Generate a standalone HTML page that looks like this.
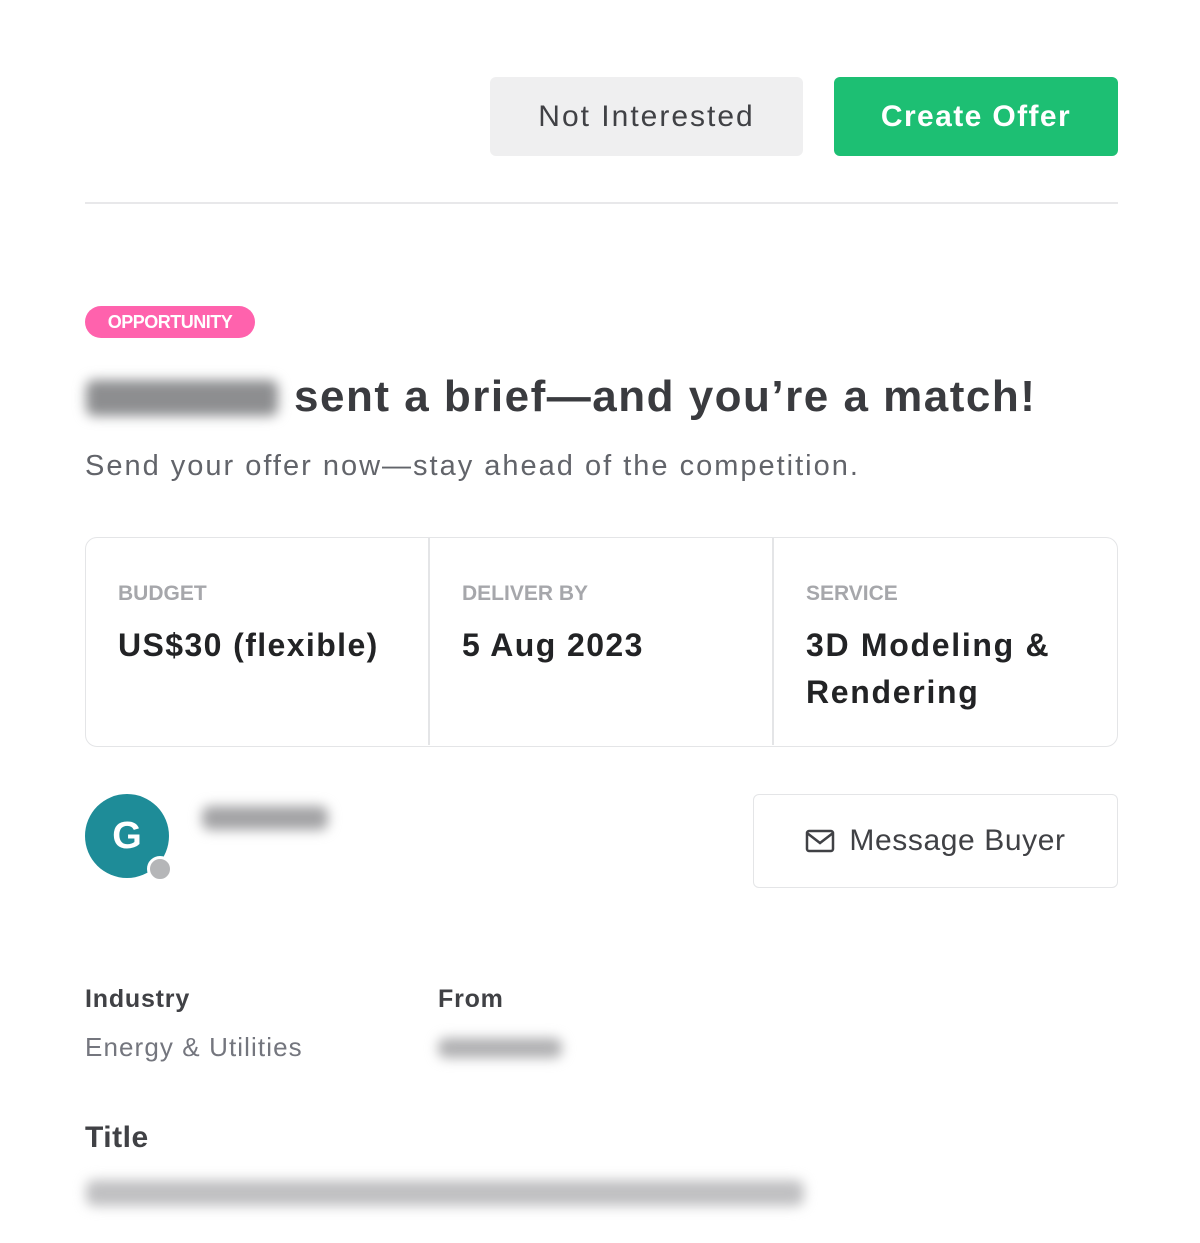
<!DOCTYPE html>
<html><head><meta charset="utf-8"><style>
*{margin:0;padding:0;box-sizing:border-box}
body{width:1200px;height:1243px;background:#fff;font-family:"Liberation Sans",Arial,sans-serif;position:relative;overflow:hidden;color:#404145}
.a{position:absolute;white-space:nowrap}
.btn{position:absolute;border-radius:6px;display:flex;align-items:center;justify-content:center;font-size:30px}
.blur{position:absolute;background:#9a9a9c;filter:blur(6px);border-radius:8px}
.lbl{position:absolute;font-size:21px;font-weight:bold;color:#a6a7ab;top:44px;left:32px}
.val{position:absolute;font-size:32px;font-weight:bold;color:#222325;top:84px;left:32px;line-height:47px;letter-spacing:1.4px}
</style></head><body>
<div class="btn" style="left:490px;top:77px;width:313px;height:79px;background:#efeff0;color:#404145;letter-spacing:2px">Not Interested</div>
<div class="btn" style="left:834px;top:77px;width:284px;height:79px;background:#1dbf73;color:#fff;font-weight:bold;letter-spacing:1.4px">Create Offer</div>
<div class="a" style="left:85px;top:202px;width:1033px;height:2px;background:#e8e8ea"></div>
<div class="a" style="left:85px;top:306px;width:170px;height:32px;border-radius:16px;background:#ff62ad;color:#fff;font-size:18px;font-weight:bold;display:flex;align-items:center;justify-content:center;letter-spacing:-0.5px">OPPORTUNITY</div>
<div class="blur" style="left:86px;top:380px;width:192px;height:36px;background:#8d8e90"></div>
<div class="a" style="left:294px;top:372px;font-size:44px;font-weight:bold;color:#3a3b3f;letter-spacing:1.5px">sent a brief—and you’re a match!</div>
<div class="a" style="left:85px;top:450px;font-size:29px;color:#62646a;letter-spacing:2px">Send your offer now—stay ahead of the competition.</div>
<div class="a" style="left:85px;top:537px;width:1033px;height:210px;border:1.5px solid #e4e5e7;border-radius:12px">
 <div class="a" style="left:342px;top:0;width:1.5px;height:207px;background:#e4e5e7"></div>
 <div class="a" style="left:686px;top:0;width:1.5px;height:207px;background:#e4e5e7"></div>
 <div class="a" style="left:0;top:0;width:342px;height:207px"><div class="lbl">BUDGET</div><div class="val">US$30 (flexible)</div></div>
 <div class="a" style="left:344px;top:0;width:342px;height:207px"><div class="lbl">DELIVER BY</div><div class="val">5 Aug 2023</div></div>
 <div class="a" style="left:688px;top:0;width:342px;height:207px"><div class="lbl">SERVICE</div><div class="val" style="letter-spacing:1.7px">3D Modeling &amp;<br>Rendering</div></div>
</div>
<div class="a" style="left:85px;top:794px;width:84px;height:84px;border-radius:50%;background:#1e8c98;color:#fff;font-size:38px;font-weight:bold;display:flex;align-items:center;justify-content:center">G</div>
<div class="a" style="left:147px;top:856px;width:26px;height:26px;border-radius:50%;background:#b5b6b8;border:3px solid #fff"></div>
<div class="blur" style="left:202px;top:806px;width:126px;height:24px;background:#a3a3a5"></div>
<div class="a" style="left:753px;top:794px;width:365px;height:94px;border:1.5px solid #e4e5e7;border-radius:6px;display:flex;align-items:center;justify-content:center;font-size:30px;color:#404145;gap:14px;letter-spacing:0.6px">
<svg width="30" height="24" viewBox="0 0 30 24"><rect x="2" y="2" width="26" height="20" rx="2" fill="none" stroke="#404145" stroke-width="2.5"/><path d="M2 4 L15 14 L28 4" fill="none" stroke="#404145" stroke-width="2.5"/></svg>Message Buyer</div>
<div class="a" style="left:85px;top:985px;font-size:25px;font-weight:bold;color:#404145;letter-spacing:0.8px">Industry</div>
<div class="a" style="left:438px;top:985px;font-size:25px;font-weight:bold;color:#404145;letter-spacing:0.8px">From</div>
<div class="a" style="left:85px;top:1032px;font-size:26px;color:#74767e;letter-spacing:1.1px">Energy &amp; Utilities</div>
<div class="blur" style="left:438px;top:1038px;width:124px;height:20px;background:#b0b0b2"></div>
<div class="a" style="left:85px;top:1121px;font-size:30px;font-weight:bold;color:#404145;letter-spacing:0.5px">Title</div>
<div class="blur" style="left:86px;top:1180px;width:718px;height:26px;background:#c0c0c2"></div>
</body></html>
